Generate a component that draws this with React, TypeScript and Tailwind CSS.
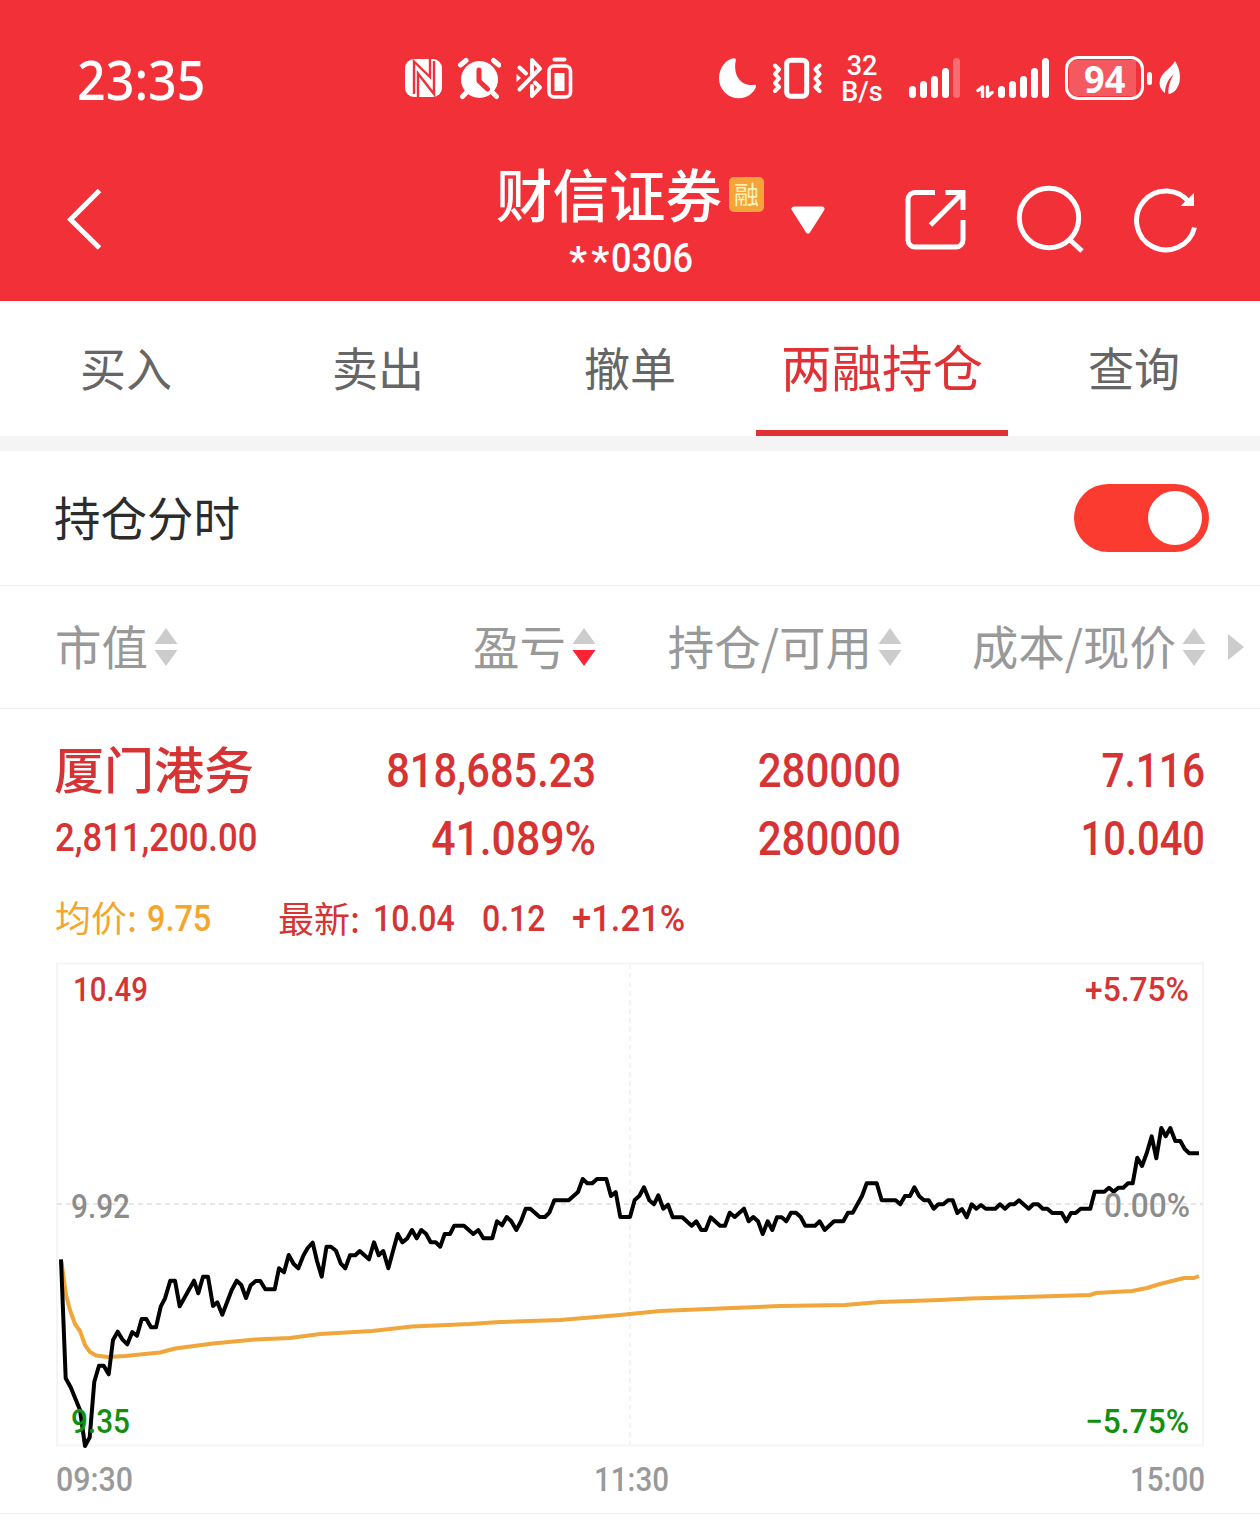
import type { ReactNode } from "react"
import { clsx } from "clsx"

const TABS = ["买入", "卖出", "撤单", "两融持仓", "查询"]
const ACTIVE_TAB = "两融持仓"

const PRICE_POINTS =
  "61,1259.3 65.7,1378.3 70.7,1387.3 80,1410 85,1446 89.7,1437.3 94.3,1381.7 99,1365.7 103.7,1365.7 108.7,1374.3 113,1340 117.7,1331.7 122.3,1339.3 127.3,1344.3 132.3,1332 137,1335.7 141.7,1319 146.3,1319 151,1327.3 156,1327.3 160.7,1306.7 165,1298.3 170.3,1280.7 175,1280.7 179.7,1306.3 194,1280.7 198.3,1293.3 203,1276.7 208,1276.7 213,1306 217.3,1302.3 222.3,1314.7 231.7,1290 236.7,1280.7 241.3,1285 246,1298 250.7,1285.3 255.7,1281 260.3,1281 265.3,1289.3 274.7,1289.3 279,1268.3 284,1272.3 288.7,1255 293.7,1264 298.3,1268.3 303.3,1255.7 307.7,1248 312.7,1242.7 317,1261 321.7,1276.7 326.5,1246.7 331,1246.7 336,1250.7 340.7,1263.3 345.3,1268.3 350,1255.3 355.3,1255.3 359.7,1251 369,1259.3 374,1242.3 378.7,1255.3 383.3,1251 388.3,1268.3 397.7,1234 402.3,1242.3 407,1238.7 412,1230 416.7,1238.3 421.3,1230 426,1233.7 430.7,1242.3 435.7,1242.3 440.3,1246.7 444.7,1234 450,1234 454.3,1225.7 464,1225.7 473.3,1234 478.3,1230 483.3,1238.3 492.3,1238.3 497,1221.3 502,1225.3 506.7,1217 511.3,1221.3 516.3,1230 521,1221.3 525.7,1208.7 530.3,1208.7 539.7,1217 545,1217 549.3,1212.7 554.3,1200.3 568.7,1200.3 578,1192 582.7,1179 587.3,1183.3 592.3,1183.3 597,1179 606.3,1179 611,1196 615.7,1192 620.3,1217 630,1217 634.7,1200 639.3,1196 644,1187.3 649.3,1200.3 654,1204.3 658.3,1195.3 663.3,1208.7 668,1204.7 672.7,1217.3 682.3,1217.3 691.7,1225.7 696.3,1221.3 701.3,1230 705.7,1230 710.7,1217.3 720,1225.7 725,1225.7 729.7,1212.7 734.7,1217 744,1208.7 748.7,1221.3 753.3,1217 758,1221.3 762.7,1234 767.7,1221.3 772.3,1230 777,1217.3 781.7,1217.3 786.3,1221.3 791,1212.7 796,1212.7 800.7,1217 805.3,1225.7 815,1225.7 819.7,1221.3 824.7,1230 834,1221.3 843.3,1221.3 848,1212.7 852.7,1212.7 862,1196 866.7,1183.3 876.7,1183.3 881.7,1200.3 895.7,1200.3 900.3,1204.3 905,1196 910,1196 914.3,1187.3 919.3,1196.3 924,1200.3 928.7,1200.3 933.7,1208.7 938.3,1204.3 943.3,1204.3 948,1200.3 952.7,1200.3 957.3,1213 962,1209 966.7,1217.3 971.7,1204.3 976.3,1208.7 981,1205 985.7,1208.7 995.3,1208.7 1000,1204.3 1005,1208.7 1009.7,1204.3 1014.3,1204.3 1019,1200.3 1028.7,1208.7 1033.3,1204.3 1038,1204.3 1042.7,1208.7 1047.3,1208.7 1052.3,1213 1061.7,1213 1066.3,1221.3 1071,1213 1075.7,1213 1080.7,1208.7 1090.3,1208.7 1094.7,1191.7 1104.3,1191.7 1109,1187.7 1113.7,1191.7 1118.3,1187.7 1123.3,1187.7 1128,1183.3 1132.7,1183.3 1137.3,1157.7 1142,1166 1146.7,1153.3 1151.7,1136.3 1156.3,1158.3 1161.3,1128 1165.7,1136.3 1170.3,1128 1175.3,1141 1180.3,1141 1184.7,1149 1189.3,1153.3 1199,1153.3"

const AVERAGE_POINTS =
  "61.5,1262 66,1295 70,1310 75,1324 80,1331 85,1345 90,1352 96,1355.5 108,1357 125,1356 160,1352.5 175,1348.5 213,1343.5 255,1339.5 290,1338 320,1334 372,1331 412,1326.5 470,1324 500,1322 560,1320 590,1317.5 620,1315 660,1311 720,1308.5 780,1306 845,1305 880,1302 940,1300 970,1298.5 1040,1296.5 1090,1295 1096,1293 1132,1291 1147,1288 1160,1284 1184,1278 1194,1278 1199,1276"

interface ChartLabel {
  text: string
  x: number
  y: number
  width: number
  fill: string
}

const CHART_LABELS: ChartLabel[] = [
  { text: "10.49", x: 73, y: 1001, width: 75, fill: "#d63434" },
  { text: "+5.75%", x: 1085, y: 1001, width: 104, fill: "#d63434" },
  { text: "9.92", x: 71, y: 1218, width: 59, fill: "#8c8c8c" },
  { text: "0.00%", x: 1104, y: 1217, width: 86, fill: "#8c8c8c" },
  { text: "9.35", x: 71, y: 1433, width: 59, fill: "#119010" },
  { text: "−5.75%", x: 1085, y: 1433, width: 104, fill: "#119010" },
  { text: "09:30", x: 56, y: 1491, width: 77, fill: "#999999" },
  { text: "11:30", x: 594, y: 1491, width: 75, fill: "#999999" },
  { text: "15:00", x: 1130, y: 1491, width: 75, fill: "#999999" },
]

function SignalBars({ faded = false }: { faded?: boolean }) {
  const heights = [12, 17, 22, 30, 40]
  return (
    <svg width="52" height="42" viewBox="0 0 52 42" className="shrink-0">
      {heights.map((h, i) => (
        <rect
          key={h}
          x={i * 11}
          y={42 - h}
          width="7"
          height={h}
          rx="3.5"
          fill="white"
          opacity={faded && i === 4 ? 0.3 : 1}
        />
      ))}
    </svg>
  )
}

function StatusBar() {
  return (
    <div className="flex h-[104px] items-start pt-[56px] text-white">
      <span className="ml-[77px] w-[327px] -mt-[4px] font-['Noto_Sans',sans-serif] text-[54px]/[54px] font-medium">
        <span className="inline-block origin-left scale-x-[0.93] whitespace-nowrap">23:35</span>
      </span>

      {/* NFC */}
      <svg width="38" height="44" viewBox="0 0 38 44" className="shrink-0">
        <rect x="1" y="3" width="37" height="38" rx="9" fill="white" />
        <path d="M10 38V5.500L26 21V3" stroke="#f23038" strokeWidth="2.400" fill="none" />
        <path d="M14 41V17.500L30 38V5" stroke="#f23038" strokeWidth="2.400" fill="none" />
      </svg>

      {/* Alarm */}
      <svg width="44" height="44" viewBox="0 0 44 44" className="ml-[15px] shrink-0">
        <circle cx="22.5" cy="23.500" r="18.500" fill="white" />
        <path d="M3.5 9 9 4.500M36.500 4.500 42 9M9 37l-3.500 3.500M36 37l3.500 3.500" stroke="white" strokeWidth="5" strokeLinecap="round" />
        <path d="M22 14v11l8.500 8" stroke="#f23038" strokeWidth="5" strokeLinecap="round" strokeLinejoin="round" fill="none" />
      </svg>

      {/* Bluetooth with device battery */}
      <svg width="58" height="44" viewBox="0 0 58 44" className="ml-[15px] shrink-0">
        <path
          d="M3.500 33.500 24 12.500 16 4V19M3.500 11.500 10 17.500M19 26.500 24 31.500 16 40V30"
          stroke="white"
          strokeWidth="4"
          strokeLinejoin="round"
          strokeLinecap="round"
          fill="none"
        />
        <path d="M.5 18 5 22l-4.500 4Z" fill="white" />
        <rect x="36.500" y="1.500" width="14" height="4" rx="2" fill="white" />
        <rect x="33" y="10" width="21.500" height="31" rx="5" fill="none" stroke="white" strokeWidth="3.600" />
        <rect x="38.500" y="17" width="10" height="18" fill="white" />
      </svg>

      {/* Do not disturb */}
      <svg width="40" height="44" viewBox="0 0 40 44" className="ml-[144px] shrink-0">
        <path d="M16 2.200C9 3 1 10.500 1 22.500a19.700 19.700 0 0 0 19.700 19.700C30 42.200 36.500 36 38 30.500c.4-1.300-.6-2-1.800-1.700C24 31 14.500 20 17.800 4.500c.3-1.400-.4-2.400-1.800-2.300Z" fill="white" />
      </svg>

      {/* Vibrate */}
      <svg width="50" height="44" viewBox="0 0 50 44" className="ml-[14px] shrink-0">
        <rect x="14.700" y="4.200" width="20" height="36" rx="4" fill="none" stroke="white" strokeWidth="5" />
        <path d="m3 9.500 4 4-4 4.500 4 4.500-4 4.500 4 4-4 4M47.500 9.500l-4 4 4 4.500-4 4.500 4 4.500-4 4 4 4" stroke="white" strokeWidth="4" strokeLinecap="round" strokeLinejoin="round" fill="none" />
      </svg>

      <div className="ml-[18px] -mt-[3px] flex w-[44px] flex-col items-center text-center font-[Roboto,sans-serif] text-[27px]/[26px] font-medium">
        <span>32</span>
        <span>B/s</span>
      </div>

      <div className="ml-[25px] flex">
        <SignalBars faded />
        <svg width="18" height="42" viewBox="0 0 18 42" className="ml-[15px] shrink-0">
          <path d="M6.500 40.500V31L2 34.500M11.500 31V40.500l4.500-4" stroke="white" strokeWidth="3.400" strokeLinejoin="round" strokeLinecap="round" fill="none" />
        </svg>
        <div className="ml-[4px]">
          <SignalBars />
        </div>
      </div>

      {/* Battery */}
      <div className="ml-[15px] flex h-[44px] items-center">
        <div className="h-[44px] w-[79px] rounded-[13px] border-[3px] border-white p-[1px]">
          <div className="flex h-full w-[67px] items-center justify-center rounded-l-[8px] bg-white/20 pl-[5px] font-['Noto_Sans',sans-serif] text-[38px]/[36px] font-bold">
            <span className="scale-x-[0.95]">94</span>
          </div>
        </div>
        <div className="ml-[3px] h-[13px] w-[5px] rounded-[3px] bg-white" />
        <svg width="22" height="36" viewBox="0 0 22 36" className="ml-[7px]">
          <path d="M16 1C20 8 22 14 20.500 22 19 29 14 34 9.500 34 9 27 11 20 15 14 9 19 6 26 6 33 2 30 0 26 .8 21 2 12 12 9 16 1Z" fill="white" />
        </svg>
      </div>
    </div>
  )
}

function TitleBar() {
  return (
    <div className="flex h-[197px] items-start text-white">
      <svg width="38" height="62" viewBox="0 0 38 62" className="mt-[84px] ml-[66px] shrink-0">
        <path d="M33.500 2.500 4.500 31.500 33.500 60" stroke="white" strokeWidth="5" fill="none" />
      </svg>

      <div className="ml-[392px] w-[269px] pt-[56px]">
        <div className="flex items-start">
          <h1 className="font-['Noto_Sans_CJK_SC',sans-serif] text-[56.5px]/[64px] font-medium whitespace-nowrap">
            财信证券
          </h1>
          <span className="mt-[17px] ml-[7px] flex size-[35px] shrink-0 items-center justify-center rounded-[5px] bg-[#f5a43a] font-['Noto_Sans_CJK_SC',sans-serif] text-[25px]/[32px] text-[#fff0b8]">
            <span className="-mt-[3px]">融</span>
          </span>
        </div>
        <p className="mt-[9px] ml-[73px] flex h-[40px] font-[Roboto,sans-serif] text-[41px]/[50px] font-medium whitespace-nowrap">
          <span className="w-[42px] pt-[3px] tracking-[4px]">**</span>
          <span className="origin-left scale-x-[0.88]">0306</span>
        </p>
      </div>

      <svg width="36" height="30" viewBox="0 0 36 30" className="mt-[101px] ml-[25px] shrink-0">
        <path d="M4 4H32L18 26Z" fill="white" stroke="white" strokeWidth="5" strokeLinejoin="round" />
      </svg>

      {/* Share */}
      <svg width="62" height="62" viewBox="0 0 62 62" className="mt-[85px] ml-[79px] shrink-0">
        <path d="M30 3.500H10a7 7 0 0 0-7 7V51a7 7 0 0 0 7 7H51a7 7 0 0 0 7-7V31" stroke="white" strokeWidth="5" fill="none" />
        <path d="M40.500 3.500H58V21M57 4.500 25.500 36" stroke="white" strokeWidth="5" fill="none" />
      </svg>

      {/* Search */}
      <svg width="70" height="70" viewBox="0 0 70 70" className="mt-[80px] ml-[49px] shrink-0">
        <circle cx="33" cy="34" r="29.700" stroke="white" strokeWidth="5" fill="none" />
        <path d="m54 56 12 11" stroke="white" strokeWidth="5" />
      </svg>

      {/* Refresh */}
      <svg width="68" height="70" viewBox="0 0 68 70" className="mt-[80px] ml-[46px] shrink-0">
        <path d="M62.500 43.500A29.400 29.400 0 1 1 58 19.500" stroke="white" strokeWidth="5" fill="none" />
        <path d="M62 9V22H48.500Z" fill="white" />
      </svg>
    </div>
  )
}

function SortArrows({ down = false }: { down?: boolean }) {
  return (
    <svg width="24" height="40" viewBox="0 0 24 40" className="ml-[6px] shrink-0">
      <path d="M12 1 23.500 17H.5Z" fill="#cccccc" />
      <path d="M.5 23H23.500L12 39Z" fill={down ? "#fc2334" : "#cccccc"} />
    </svg>
  )
}

function ColumnTitle({ label, down }: { label: string; down?: boolean }) {
  return (
    <div className="flex items-center justify-end first:justify-start">
      <span className="-mt-[5px] text-[46.5px]/[60px] whitespace-nowrap">{label}</span>
      <SortArrows down={down} />
    </div>
  )
}

function Figure({ children, className = "scale-x-[0.885]" }: { children: ReactNode; className?: string }) {
  return (
    <span
      className={clsx(
        "block origin-right text-right font-[Roboto,sans-serif] text-[47.5px]/[68px] font-medium",
        className
      )}
    >
      {children}
    </span>
  )
}

function HoldingChart() {
  return (
    <svg width="1260" height="556" viewBox="0 957 1260 556" className="block">
      <rect x="57" y="963.5" width="1146" height="482" fill="none" stroke="#f5f5f5" strokeWidth="2" />
      <path d="M630 964V1445" stroke="#f3f3f3" strokeWidth="2" strokeDasharray="5 4" />
      <path d="M57 1204H1203" stroke="#dedede" strokeWidth="1.6" strokeDasharray="5 4" />
      <polyline points={AVERAGE_POINTS} fill="none" stroke="#f0a63a" strokeWidth="4" strokeLinejoin="round" />
      <polyline points={PRICE_POINTS} fill="none" stroke="black" strokeWidth="4" strokeLinejoin="round" />
      {CHART_LABELS.map((label) => (
        <text
          key={label.text}
          x={label.x}
          y={label.y}
          fill={label.fill}
          textLength={label.width}
          lengthAdjust="spacingAndGlyphs"
          className="font-[Roboto,sans-serif] text-[34px] font-medium"
        >
          {label.text}
        </text>
      ))}
    </svg>
  )
}

export default function App() {
  return (
    <div className="h-[1526px] w-[1260px] overflow-hidden bg-white font-['Noto_Sans_CJK_SC',sans-serif]">
      <header className="h-[301px] bg-[#f23038]">
        <StatusBar />
        <TitleBar />
      </header>

      <nav className="grid h-[150px] grid-cols-5 border-b-[15px] border-[#f4f4f4]">
        {TABS.map((tab) => (
          <button
            key={tab}
            className={clsx(
              "flex items-center justify-center border-b-[6px] whitespace-nowrap",
              tab === ACTIVE_TAB
                ? "border-[#e03236] text-[50.5px] text-[#e03236]"
                : "border-transparent pt-[2px] text-[46px] text-[#666666]"
            )}
          >
            {tab}
          </button>
        ))}
      </nav>

      <section className="flex h-[135px] items-center justify-between border-b border-[#ececec] pr-[51px] pl-[54px]">
        <h2 className="-mt-[4px] text-[46.5px] text-[#2c2c2c]">持仓分时</h2>
        <button className="flex h-[68px] w-[135px] items-center justify-end rounded-full bg-[#fb3b30] pr-[7px]">
          <span className="size-[54px] rounded-full bg-white" />
        </button>
      </section>

      <div className="flex h-[123px] items-center border-b border-[#ececec] pl-[55px] text-[#999999]">
        <div className="grid grid-cols-[230px_311px_306px_304px]">
          <ColumnTitle label="市值" />
          <ColumnTitle label="盈亏" down />
          <ColumnTitle label="持仓/可用" />
          <ColumnTitle label="成本/现价" />
        </div>
        <svg width="18" height="28" viewBox="0 0 18 28" className="ml-[21px]">
          <path d="M1 1 17 14 1 27Z" fill="#cccccc" />
        </svg>
      </div>

      <section className="border-b border-[#ececec]">
        <div className="grid grid-cols-[230px_311px_305px_304px] pt-[28px] pl-[55px] text-[#d63434]">
          <div>
            <p className="-mt-[4px] -ml-[1px] pb-[4px] text-[50px]/[68px] font-medium whitespace-nowrap">厦门港务</p>
            <p className="origin-left scale-x-[0.9] font-[Roboto,sans-serif] text-[38.5px]/[66px] font-medium">
              2,811,200.00
            </p>
          </div>
          <div>
            <Figure className="scale-x-[0.875]">818,685.23</Figure>
            <Figure className="scale-x-[0.9]">41.089%</Figure>
          </div>
          <div>
            <Figure>280000</Figure>
            <Figure>280000</Figure>
          </div>
          <div>
            <Figure className="scale-x-[0.855]">7.116</Figure>
            <Figure className="scale-x-[0.84]">10.040</Figure>
          </div>
        </div>

        {/* Quote legend */}
        <div className="flex h-[84px] items-center pt-[8px] pl-[55px] text-[36px]/[50px] font-medium whitespace-nowrap text-[#d63434]">
          <div className="flex w-[223px] text-[#f5a52b]">
            <span className="-mt-[3px] w-[92px] font-normal">均价:</span>
            <span className="origin-left scale-x-90 font-[Roboto,sans-serif]">9.75</span>
          </div>
          <span className="-mt-[5px] w-[95px] font-normal">最新:</span>
          <span className="w-[109px] origin-left scale-x-[0.89] font-[Roboto,sans-serif]">10.04</span>
          <span className="w-[90px] origin-left scale-x-[0.89] font-[Roboto,sans-serif]">0.12</span>
          <span className="origin-left scale-x-[0.96] font-[Roboto,sans-serif]">+1.21%</span>
        </div>

        <HoldingChart />
      </section>
    </div>
  )
}
